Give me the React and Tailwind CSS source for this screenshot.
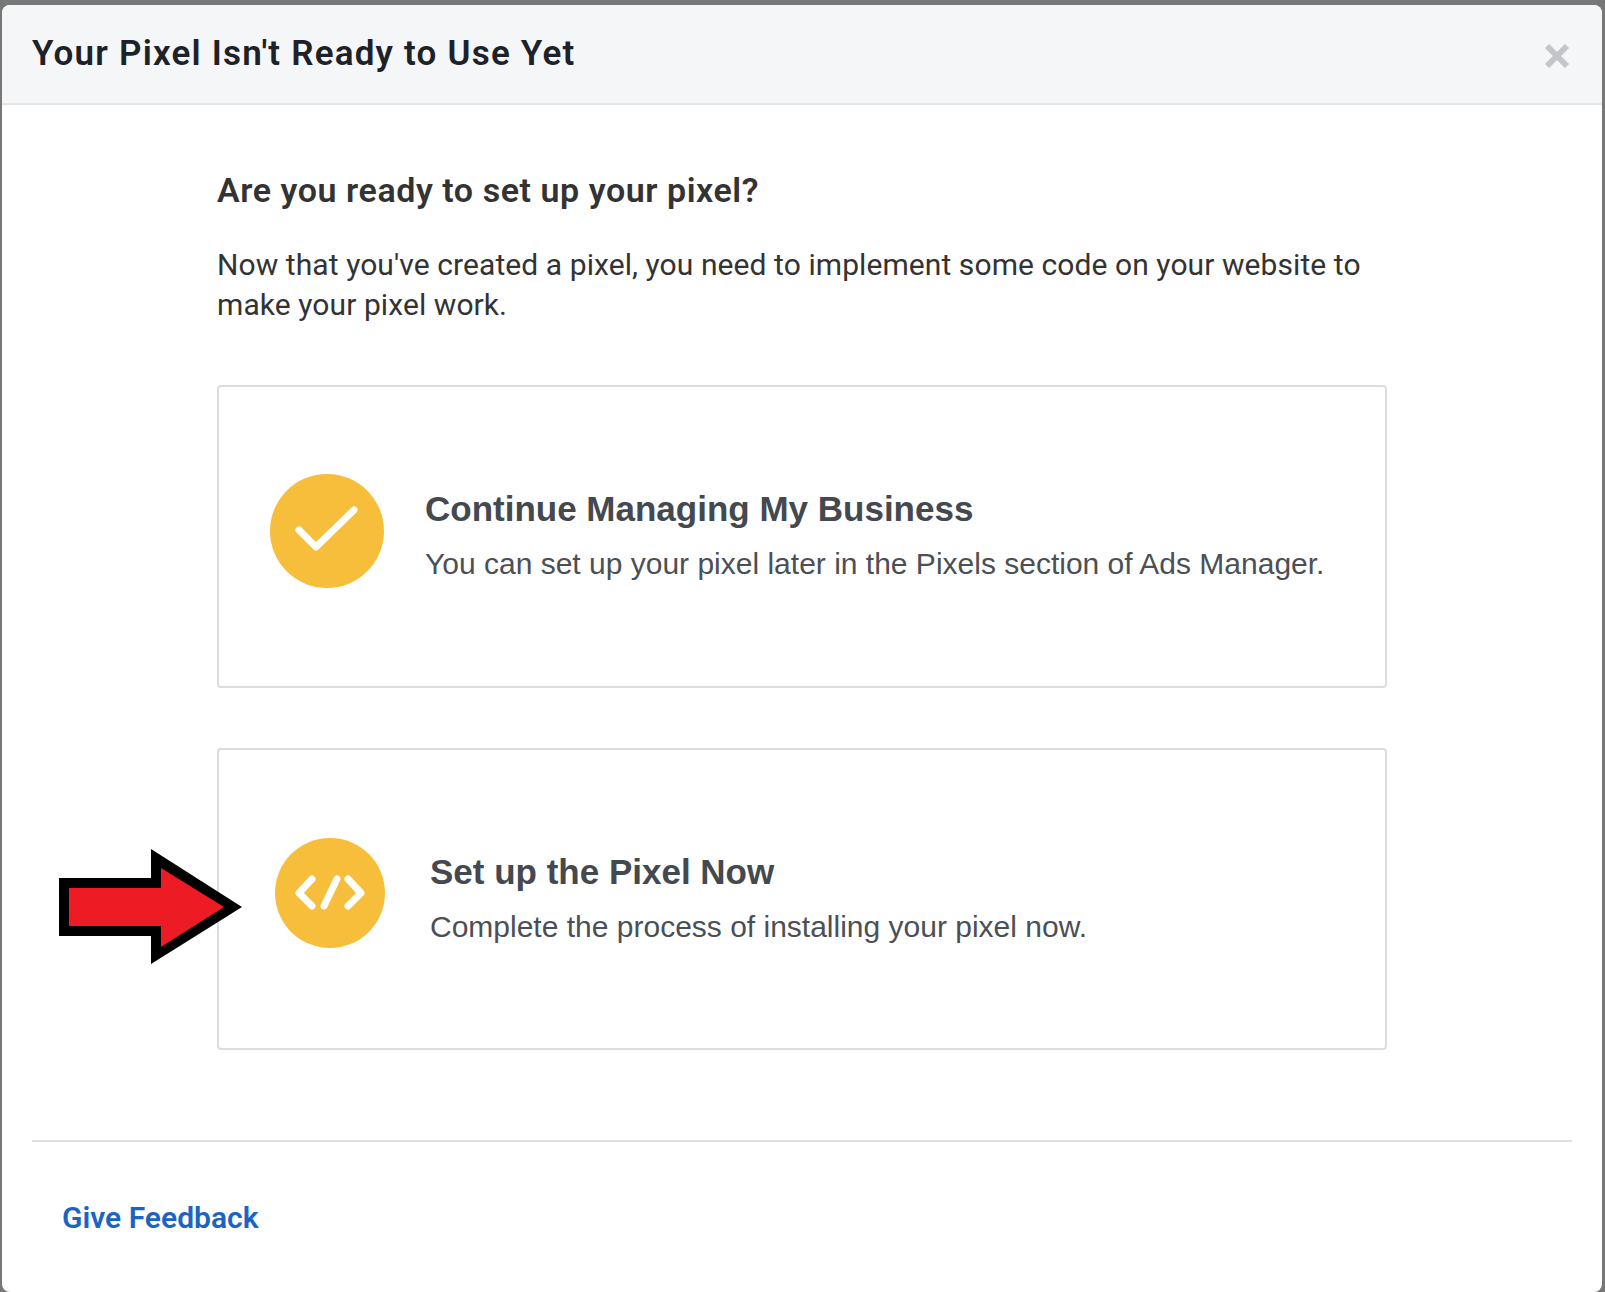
function CheckIcon() {
  return (
    <div className="mr-[41px] flex h-[114px] w-[114px] shrink-0 items-center justify-center rounded-full bg-[#f7be3b]">
      <svg width="114" height="114" viewBox="0 0 114 114" fill="none">
        <path d="M29 56L46 73L84 36" stroke="white" strokeWidth="7" strokeLinecap="round" strokeLinejoin="round" />
      </svg>
    </div>
  );
}

function CodeIcon() {
  return (
    <div className="mr-[45px] flex h-[110px] w-[110px] shrink-0 items-center justify-center rounded-full bg-[#f7be3b]">
      <svg width="110" height="110" viewBox="0 0 110 110" fill="none">
        <path
          d="M37 41L24 55L37 68M62 41L49 68M73 41L86 55L73 68"
          stroke="white"
          strokeWidth="7"
          strokeLinecap="round"
          strokeLinejoin="round"
        />
      </svg>
    </div>
  );
}

function Arrow() {
  return (
    <svg className="absolute left-[-158px] top-[101px]" width="185" height="117" viewBox="59 849 185 117">
      <polygon points="59,878 151,878 151,849 242,907 151,964 151,936 59,936" fill="black" />
      <polygon points="69,888 161,888 161,868 224,907 161,947 161,926 69,926" fill="#ed1c24" />
    </svg>
  );
}

function Option({ icon, title, text, className }) {
  return (
    <div className={`relative flex w-[1170px] items-center rounded border-2 border-[#dcdddf] bg-white pb-[12px] ${className}`}>
      {icon}
      <div className="mt-[12px] font-['Liberation_Sans',sans-serif]">
        <div className="text-[35px] font-bold leading-[40px] text-[#444950]">{title}</div>
        <div className="mt-[15px] text-[30px] leading-[40px] text-[#4b4f56]">{text}</div>
      </div>
    </div>
  );
}

export default function App() {
  return (
    <div className="h-[1292px] overflow-hidden bg-[#777777] pl-[2px] pr-[3px] pt-[5px] font-['Roboto',sans-serif]">
      <div className="h-[1287px] rounded-[8px] bg-white">
        <div className="flex h-[100px] items-center justify-between rounded-t-[8px] border-b-2 border-[#e5e5e5] bg-[#f5f6f7] pl-[30px] pr-[32px]">
          <h1 className="text-[35px] font-semibold leading-[40px] tracking-[1.2px] text-[#1d2129]">Your Pixel Isn't Ready to Use Yet</h1>
          <svg width="26" height="26" viewBox="0 0 26 26" className="mt-[4px]">
            <path d="M3 3L23 23M23 3L3 23" stroke="#c4c5ca" strokeWidth="6" />
          </svg>
        </div>

        <div className="pl-[215px]">
          <h2 className="mt-[63px] text-[34px] font-semibold leading-[44px] tracking-[0.55px] text-[#333333]">Are you ready to set up your pixel?</h2>
          <p className="mt-[33px] w-[1180px] text-[30px] leading-[40px] tracking-[0.08px] text-[#333333]">
            Now that you've created a pixel, you need to implement some code on your website to make your pixel work.
          </p>
          <Option
            className="mt-[60px] h-[303px] pl-[51px]"
            icon={<CheckIcon />}
            title="Continue Managing My Business"
            text="You can set up your pixel later in the Pixels section of Ads Manager."
          />
          <div className="relative mt-[60px]">
            <Option
              className="h-[302px] pl-[56px]"
              icon={<CodeIcon />}
              title="Set up the Pixel Now"
              text="Complete the process of installing your pixel now."
            />
            <Arrow />
          </div>
        </div>

        <div className="ml-[30px] mt-[90px] w-[1540px] border-t-2 border-[#e0e0e0] pl-[30px] pt-[56px]">
          <a className="text-[30px] font-semibold leading-[40px] text-[#1c64c4]">Give Feedback</a>
        </div>
      </div>
    </div>
  );
}
